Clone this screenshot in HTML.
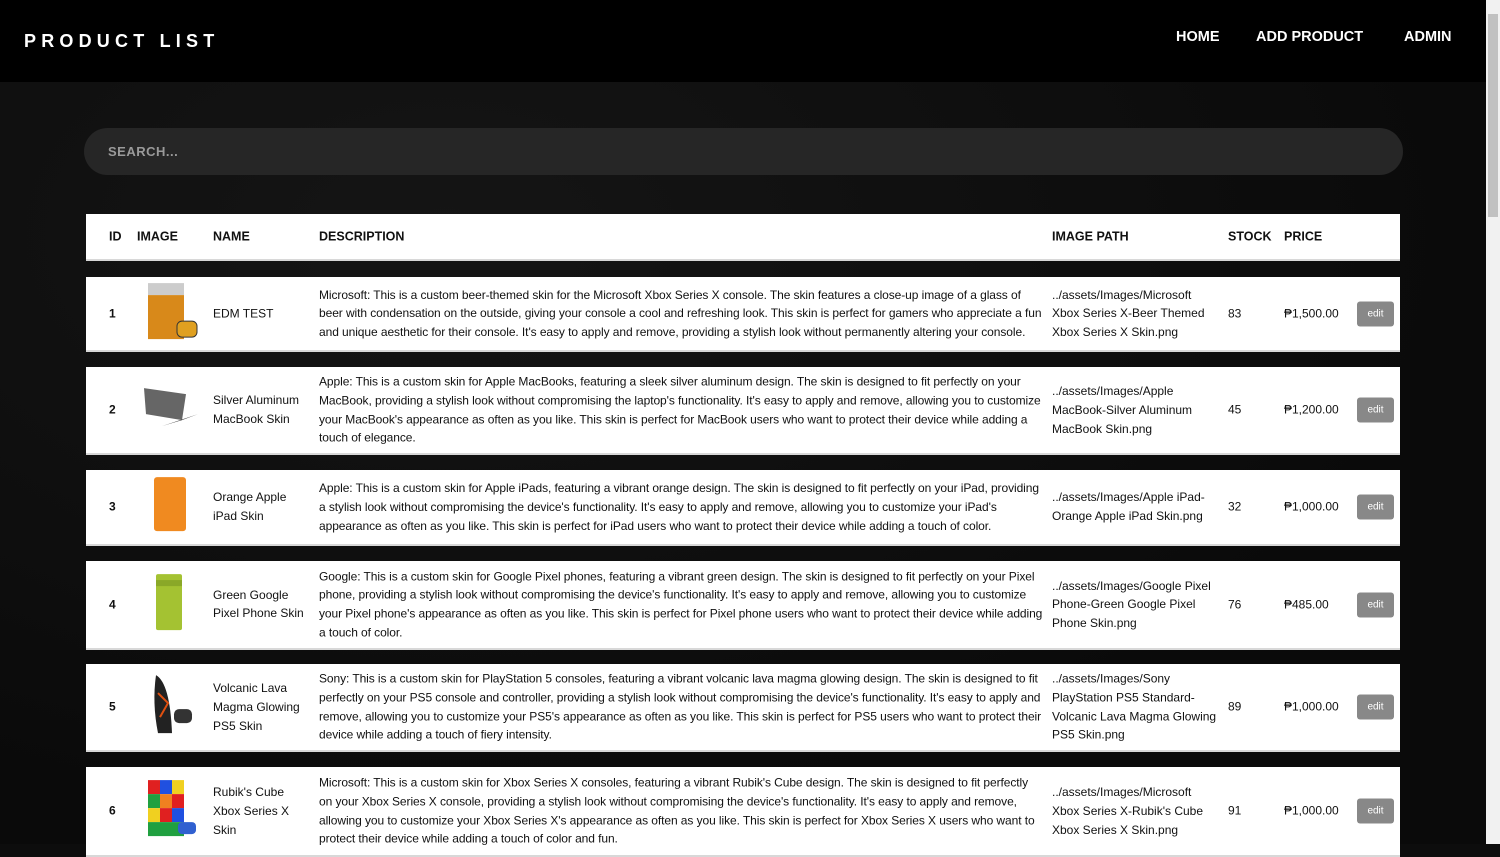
<!DOCTYPE html>
<html><head><meta charset="utf-8"><style>
*{margin:0;padding:0;box-sizing:border-box}
body{width:1500px;height:844px;overflow:hidden;background:#0d0d0d;font-family:"Liberation Sans",sans-serif;position:relative}
.hdr{position:absolute;left:0;top:0;width:1486px;height:82px;background:#000}
.logo{position:absolute;left:24px;top:31px;color:#fff;font-weight:bold;font-size:18px;letter-spacing:5.2px}
.nav{position:absolute;top:29px;color:#fff;font-weight:bold;font-size:14.5px}
.bgl{position:absolute;left:0;top:82px;width:1486px;height:762px;background:radial-gradient(ellipse at 30% 20%,#151515,#0a0a0a 70%)}
.sb{position:absolute;left:1486px;top:0;width:14px;height:844px;background:#f1f1f1;z-index:5}
.sb i{position:absolute;left:2px;top:14px;width:10px;height:203px;background:#c1c1c1}
.search{position:absolute;left:84px;top:128px;width:1319px;height:47px;border-radius:24px;background:#262626;color:#9a9a9a;font-weight:bold;font-size:13px;padding:16px 0 0 24px;letter-spacing:.5px}
.row{position:absolute;left:86px;width:1314px;background:#fff;border-bottom:2px solid #d8d8d8;font-size:12px;color:#111;line-height:18.8px}
.row>div{position:absolute;top:50%;transform:translateY(-50%)}
.d{letter-spacing:-0.08px}
.th{font-weight:bold;font-size:12.5px}
.edit{background:#888;color:#fff;font-size:10px;width:37px;height:25px;border-radius:3px;text-align:center;line-height:25px}
</style></head><body>
<div class="hdr"><div class="logo">PRODUCT LIST</div>
<div class="nav" style="left:1176px">HOME</div><div class="nav" style="left:1256px">ADD PRODUCT</div><div class="nav" style="left:1404px">ADMIN</div></div>
<div class="bgl"></div>
<div class="sb"><i></i></div>
<div class="search">SEARCH...</div>

<div class="row th" style="top:214px;height:47px">
<div style="left:23px">ID</div><div style="left:51px">IMAGE</div><div style="left:127px">NAME</div><div style="left:233px">DESCRIPTION</div><div style="left:966px">IMAGE PATH</div><div style="left:1142px">STOCK</div><div style="left:1198px">PRICE</div></div>

<div class="row" style="top:277px;height:75px">
<div style="left:23px;font-weight:bold">1</div>
<div style="left:61px"><svg width="52" height="60"><rect x="1" y="2" width="36" height="12" fill="#ccc"/><rect x="1" y="14" width="36" height="44" fill="#d8891a"/><rect x="30" y="40" width="20" height="16" rx="5" fill="#e0a020" stroke="#333"/></svg></div>
<div style="left:127px">EDM TEST</div>
<div class="d" style="left:233px;width:725px">Microsoft: This is a custom beer-themed skin for the Microsoft Xbox Series X console. The skin features a close-up image of a glass of beer with condensation on the outside, giving your console a cool and refreshing look. This skin is perfect for gamers who appreciate a fun and unique aesthetic for their console. It's easy to apply and remove, providing a stylish look without permanently altering your console.</div>
<div style="left:966px;width:165px">../assets/Images/Microsoft Xbox Series X-Beer Themed Xbox Series X Skin.png</div>
<div style="left:1142px">83</div><div style="left:1198px">₱1,500.00</div><div class="edit" style="left:1271px">edit</div></div>

<div class="row" style="top:367px;height:88px">
<div style="left:23px;font-weight:bold">2</div>
<div style="left:56px"><svg width="56" height="46"><polygon points="2,4 44,10 40,36 4,30" fill="#666"/><polygon points="40,36 56,30 20,42" fill="#444"/></svg></div>
<div style="left:127px">Silver Aluminum<br>MacBook Skin</div>
<div class="d" style="left:233px;width:725px">Apple: This is a custom skin for Apple MacBooks, featuring a sleek silver aluminum design. The skin is designed to fit perfectly on your MacBook, providing a stylish look without compromising the laptop's functionality. It's easy to apply and remove, allowing you to customize your MacBook's appearance as often as you like. This skin is perfect for MacBook users who want to protect their device while adding a touch of elegance.</div>
<div style="left:966px;width:165px">../assets/Images/Apple MacBook-Silver Aluminum MacBook Skin.png</div>
<div style="left:1142px">45</div><div style="left:1198px">₱1,200.00</div><div class="edit" style="left:1271px">edit</div></div>

<div class="row" style="top:470px;height:76px">
<div style="left:23px;font-weight:bold">3</div>
<div style="left:67px"><svg width="34" height="56"><rect x="1" y="1" width="32" height="54" rx="3" fill="#f08a20"/></svg></div>
<div style="left:127px">Orange Apple<br>iPad Skin</div>
<div class="d" style="left:233px;width:725px">Apple: This is a custom skin for Apple iPads, featuring a vibrant orange design. The skin is designed to fit perfectly on your iPad, providing a stylish look without compromising the device's functionality. It's easy to apply and remove, allowing you to customize your iPad's appearance as often as you like. This skin is perfect for iPad users who want to protect their device while adding a touch of color.</div>
<div style="left:966px;width:165px">../assets/Images/Apple iPad-Orange Apple iPad Skin.png</div>
<div style="left:1142px">32</div><div style="left:1198px">₱1,000.00</div><div class="edit" style="left:1271px">edit</div></div>

<div class="row" style="top:561px;height:89px">
<div style="left:23px;font-weight:bold">4</div>
<div style="left:69px"><svg width="28" height="58"><rect x="1" y="1" width="26" height="56" rx="2" fill="#a4c232"/><rect x="1" y="7" width="26" height="6" fill="#8aa828"/></svg></div>
<div style="left:127px">Green Google<br>Pixel Phone Skin</div>
<div class="d" style="left:233px;width:725px">Google: This is a custom skin for Google Pixel phones, featuring a vibrant green design. The skin is designed to fit perfectly on your Pixel phone, providing a stylish look without compromising the device's functionality. It's easy to apply and remove, allowing you to customize your Pixel phone's appearance as often as you like. This skin is perfect for Pixel phone users who want to protect their device while adding a touch of color.</div>
<div style="left:966px;width:165px">../assets/Images/Google Pixel Phone-Green Google Pixel Phone Skin.png</div>
<div style="left:1142px">76</div><div style="left:1198px">₱485.00</div><div class="edit" style="left:1271px">edit</div></div>

<div class="row" style="top:664px;height:88px">
<div style="left:23px;font-weight:bold">5</div>
<div style="left:62px"><svg width="46" height="62"><path d="M8 2 Q22 10 24 60 L10 60 Q4 30 8 2Z" fill="#222"/><path d="M10 20 L20 30 L12 44" stroke="#e05010" fill="none" stroke-width="2"/><rect x="26" y="36" width="18" height="14" rx="5" fill="#333"/></svg></div>
<div style="left:127px">Volcanic Lava<br>Magma Glowing<br>PS5 Skin</div>
<div class="d" style="left:233px;width:725px">Sony: This is a custom skin for PlayStation 5 consoles, featuring a vibrant volcanic lava magma glowing design. The skin is designed to fit perfectly on your PS5 console and controller, providing a stylish look without compromising the device's functionality. It's easy to apply and remove, allowing you to customize your PS5's appearance as often as you like. This skin is perfect for PS5 users who want to protect their device while adding a touch of fiery intensity.</div>
<div style="left:966px;width:165px">../assets/Images/Sony PlayStation PS5 Standard-Volcanic Lava Magma Glowing PS5 Skin.png</div>
<div style="left:1142px">89</div><div style="left:1198px">₱1,000.00</div><div class="edit" style="left:1271px">edit</div></div>

<div class="row" style="top:767px;height:90px">
<div style="left:23px;font-weight:bold">6</div>
<div style="left:60px"><svg width="52" height="60"><rect x="2" y="2" width="12" height="14" fill="#e02020"/><rect x="14" y="2" width="12" height="14" fill="#2050e0"/><rect x="26" y="2" width="12" height="14" fill="#f0d020"/><rect x="2" y="16" width="12" height="14" fill="#20a040"/><rect x="14" y="16" width="12" height="14" fill="#f08020"/><rect x="26" y="16" width="12" height="14" fill="#e02020"/><rect x="2" y="30" width="12" height="14" fill="#f0d020"/><rect x="14" y="30" width="12" height="14" fill="#e02020"/><rect x="26" y="30" width="12" height="14" fill="#2050e0"/><rect x="2" y="44" width="36" height="14" fill="#20a040"/><rect x="32" y="44" width="18" height="12" rx="4" fill="#3060d0"/></svg></div>
<div style="left:127px">Rubik's Cube<br>Xbox Series X<br>Skin</div>
<div class="d" style="left:233px;width:725px">Microsoft: This is a custom skin for Xbox Series X consoles, featuring a vibrant Rubik's Cube design. The skin is designed to fit perfectly on your Xbox Series X console, providing a stylish look without compromising the device's functionality. It's easy to apply and remove, allowing you to customize your Xbox Series X's appearance as often as you like. This skin is perfect for Xbox Series X users who want to protect their device while adding a touch of color and fun.</div>
<div style="left:966px;width:165px">../assets/Images/Microsoft Xbox Series X-Rubik's Cube Xbox Series X Skin.png</div>
<div style="left:1142px">91</div><div style="left:1198px">₱1,000.00</div><div class="edit" style="left:1271px">edit</div></div>
</body></html>
